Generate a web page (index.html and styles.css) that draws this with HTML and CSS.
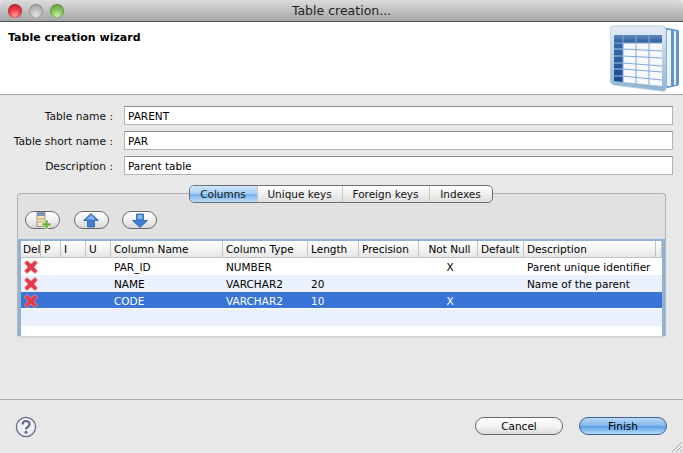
FILE: index.html
```html
<!DOCTYPE html>
<html lang="en">
<head>
  <meta charset="UTF-8" />
  <title>Table creation...</title>
  <link rel="stylesheet" href="styles.css">
</head>
<body>
  <div class="window">
    <div class="titlebar">
      <div class="lights">
        <span class="light red"></span>
        <span class="light grey"></span>
        <span class="light green"></span>
      </div>
      <div class="windowTitle">Table creation...</div>
    </div>

    <div class="banner">
      <div class="bannerTitle">Table creation wizard</div>
      <svg class="bannerIcon" width="70" height="68" viewBox="0 0 70 68">
        <defs>
          <linearGradient id="pageFill" x1="0" y1="0" x2="0" y2="1">
            <stop offset="0" stop-color="#e4edf8"/>
            <stop offset="1" stop-color="#8fb2d2"/>
          </linearGradient>
          <linearGradient id="headFill" x1="0" y1="0" x2="0" y2="1">
            <stop offset="0" stop-color="#5f88c0"/>
            <stop offset="1" stop-color="#2f5d98"/>
          </linearGradient>
          <linearGradient id="sideFill" x1="0" y1="0" x2="0" y2="1">
            <stop offset="0" stop-color="#3a6bad"/>
            <stop offset="1" stop-color="#1b4a8a"/>
          </linearGradient>
        </defs>
        <path d="M52 2 L68 5 Q69 5 69 7 V59 Q69 61 67 61 L52 64 Z" fill="#5f97c8"/>
        <path d="M57 5 H61 V61 H57 Z M64 6 H66 V60 H64 Z" fill="#eef4fb"/>
        <path d="M4 1 H52 Q56 1 56 5 V63 Q56 67 52 66 L4 60 Q0 59 0 55 V5 Q0 1 4 1 Z" fill="url(#pageFill)" stroke="#b4cbe0"/>
        <path d="M4 10 H52 V18 H4 Z" fill="url(#headFill)"/>
        <path d="M4 18 H13 V57 L4 56 Z" fill="url(#sideFill)"/>
        <path d="M13 18 H52 V61 L13 57 Z" fill="#f7f9fc"/>
        <path d="M13 24 L52 26 M13 31 L52 33 M13 38 L52 41 M13 44 L52 47 M13 51 L52 55 M13 10 V57 M26 10 V59 M39 10 V60 M4 18 H52" stroke="#7fa9dc" stroke-width="1" fill="none"/>
        <path d="M4 24 H13 M4 31 H13 M4 38 H13 M4 44 H13 M4 51 H13" stroke="#a8c4e6" stroke-width="1" fill="none"/>
      </svg>
    </div>

    <div class="content">
      <div class="field">
        <label class="fieldLabel" for="tableName">Table name :</label>
        <input class="fieldInput" id="tableName" value="PARENT">
      </div>
      <div class="field">
        <label class="fieldLabel" for="shortName">Table short name :</label>
        <input class="fieldInput" id="shortName" value="PAR">
      </div>
      <div class="field">
        <label class="fieldLabel" for="description">Description :</label>
        <input class="fieldInput" id="description" value="Parent table">
      </div>

      <div class="folder">
        <div class="tabs">
          <button class="tab active">Columns</button>
          <button class="tab">Unique keys</button>
          <button class="tab">Foreign keys</button>
          <button class="tab">Indexes</button>
        </div>
        <div class="folderBody">
          <div class="toolbar">
            <button class="toolBtn" aria-label="Add column">
              <svg width="18" height="17" viewBox="0 0 18 17">
                <rect x="3" y="0.5" width="8" height="14" fill="#f1e6b0" stroke="#8c96a8"/>
                <rect x="3" y="0.5" width="8" height="3.5" fill="#7f93b8"/>
                <path d="M4 7 H10 M4 10 H10" stroke="#b9a66a"/>
                <path d="M11 8 H14 V11 H17 V14 H14 V17 H11 V14 H8 V11 H11 Z" fill="#6cb33f" stroke="#fff" stroke-width="0.5"/>
              </svg>
            </button>
            <button class="toolBtn" aria-label="Move up">
              <svg width="16" height="15" viewBox="0 0 16 15">
                <path d="M8 0.5 L15.5 7.5 H11.5 V14 H4.5 V7.5 H0.5 Z" fill="#3f7ed0" stroke="#2d5fa8" stroke-width="0.8"/>
                <path d="M8 2 L12.5 6.5 H3.5 Z" fill="#8ab8ee"/>
              </svg>
            </button>
            <button class="toolBtn" aria-label="Move down">
              <svg width="16" height="15" viewBox="0 0 16 15">
                <path d="M8 14.5 L15.5 7.5 H11.5 V1 H4.5 V7.5 H0.5 Z" fill="#3f7ed0" stroke="#2d5fa8" stroke-width="0.8"/>
                <path d="M5.5 2 H10.5 V6 H5.5 Z" fill="#8ab8ee"/>
              </svg>
            </button>
          </div>

          <div class="tableFrame">
            <table class="columnsTable">
              <colgroup>
                <col class="colDel"><col class="colP"><col class="colI"><col class="colU">
                <col class="colName"><col class="colType"><col class="colLength"><col class="colPrecision">
                <col class="colNotNull"><col class="colDefault"><col class="colDesc"><col>
              </colgroup>
              <thead>
                <tr>
                  <th>Del</th><th>P</th><th>I</th><th>U</th>
                  <th>Column Name</th><th>Column Type</th><th>Length</th><th>Precision</th>
                  <th class="center">Not Null</th><th>Default</th><th>Description</th><th></th>
                </tr>
              </thead>
              <tbody>
                <tr>
                  <td class="delCell"><svg class="delIcon" viewBox="0 0 14 14"><use href="#cross"/></svg></td>
                  <td></td><td></td><td></td>
                  <td>PAR_ID</td><td>NUMBER</td><td></td><td></td>
                  <td class="center">X</td><td></td><td>Parent unique identifier</td><td></td>
                </tr>
                <tr class="alt">
                  <td class="delCell"><svg class="delIcon" viewBox="0 0 14 14"><use href="#cross"/></svg></td>
                  <td></td><td></td><td></td>
                  <td>NAME</td><td>VARCHAR2</td><td>20</td><td></td>
                  <td></td><td></td><td>Name of the parent</td><td></td>
                </tr>
                <tr class="selected">
                  <td class="delCell"><svg class="delIcon" viewBox="0 0 14 14"><use href="#cross"/></svg></td>
                  <td></td><td></td><td></td>
                  <td>CODE</td><td>VARCHAR2</td><td>10</td><td></td>
                  <td class="center">X</td><td></td><td></td><td></td>
                </tr>
                <tr class="alt">
                  <td colspan="12"></td>
                </tr>
              </tbody>
            </table>
          </div>
        </div>
      </div>
    </div>

    <div class="footer">
      <svg class="help" width="22" height="22" viewBox="0 0 22 22">
        <circle cx="11" cy="11" r="9.6" fill="#f0f0f2" stroke="#62708c" stroke-width="1.3"/>
        <path d="M7.6 8.4 C7.6 3.9 14.6 3.9 14.6 8.2 C14.6 10.8 11 10.8 11 13.4" fill="none" stroke="#5b6b8a" stroke-width="2.2"/>
        <circle cx="11" cy="16.3" r="1.5" fill="#5b6b8a"/>
      </svg>
      <div class="actions">
        <button class="actionBtn">Cancel</button>
        <button class="actionBtn primary">Finish</button>
      </div>
      <svg class="grip" width="12" height="12" viewBox="0 0 12 12">
        <path d="M11 1 L1 11 M11 5 L5 11 M11 9 L9 11" stroke="#a8a8a8" fill="none"/>
      </svg>
    </div>
  </div>

  <svg width="0" height="0" class="defs">
    <symbol id="cross" viewBox="0 0 14 14">
      <path d="M3 0.5 L7 4 L11 0.5 L13.5 3 L10 7 L13.5 11 L11 13.5 L7 10 L3 13.5 L0.5 11 L4 7 L0.5 3 Z" fill="#e23a48" stroke="#f08a90" stroke-width="0.8"/>
    </symbol>
  </svg>
</body>
</html>
```

FILE: styles.css
```css
html, body {
  margin: 0;
  height: 100%;
}

body {
  background: #e8e8e8;
  color: #000;
  font-family: "DejaVu Sans", "Liberation Sans", sans-serif;
  font-size: 10.5px;
  overflow: hidden;
}

.defs {
  display: block;
  height: 0;
}

.window {
  position: relative;
  height: 453px;
  display: flex;
  flex-direction: column;
}

.titlebar {
  height: 21px;
  flex: none;
  display: flex;
  align-items: center;
  background: linear-gradient(#dcdcdc, #a6a6a6);
  border-bottom: 1px solid #515151;
  border-radius: 5px 5px 0 0;
}

.lights {
  display: flex;
  gap: 7px;
  margin-left: 8px;
  width: 56px;
  flex: none;
}

.light {
  width: 14px;
  height: 14px;
  border-radius: 50%;
  box-shadow: inset 0 0 0 1px rgba(0,0,0,0.18);
}

.red {
  background: radial-gradient(circle at 50% 85%, #ff9a9a, #e8313a 55%, #b5333a);
}

.grey {
  background: radial-gradient(circle at 50% 85%, #e4e4e4, #b4b4b4 60%, #989898);
}

.green {
  background: radial-gradient(circle at 50% 85%, #c8f0a8, #7dbd55 55%, #5f9e48);
}

.windowTitle {
  flex: 1;
  text-align: center;
  padding-right: 64px;
  font-size: 12.5px;
  color: #222;
}

.banner {
  height: 73px;
  flex: none;
  background: #fff;
  border-bottom: 1px solid #a9a9a9;
  display: flex;
  justify-content: space-between;
  padding: 9px 3px 0 8px;
  box-sizing: border-box;
}

.bannerTitle {
  font-weight: bold;
  font-size: 11px;
}

.bannerIcon {
  margin-top: -6px;
}

.content {
  flex: 1;
  padding: 11px 10px 0 0;
  display: flex;
  flex-direction: column;
  gap: 6px;
}

.field {
  display: flex;
  align-items: center;
  height: 19px;
}

.fieldLabel {
  width: 113px;
  margin-right: 11px;
  padding-top: 1px;
  text-align: right;
  flex: none;
  color: #111;
  font-size: 10.7px;
}

.fieldInput {
  flex: 1;
  min-width: 0;
  height: 19px;
  box-sizing: border-box;
  border: 1px solid #b4b4b4;
  border-top-color: #8e8e8e;
  background: #fff;
  padding: 0 3px;
  font: inherit;
  color: #000;
  outline: none;
}

.folder {
  margin: 4px 7px 0 17px;
  display: flex;
  flex-direction: column;
}

.tabs {
  display: flex;
  align-self: center;
  height: 16px;
  margin-right: 2px;
  margin-bottom: -10px;
  border: 1px solid #6f6f6f;
  border-radius: 5px;
  background: linear-gradient(#fff, #ececec 60%, #dedede);
  overflow: hidden;
  position: relative;
  z-index: 1;
}

.tab {
  border: 0;
  border-left: 1px solid #c8c8c8;
  background: none;
  padding: 0;
  font: inherit;
  color: #111;
  width: 87px;
}

.tab:first-child {
  border-left: 0;
  width: 67px;
}

.tab:nth-child(2) {
  width: 85px;
}

.tab:last-child {
  width: 63px;
}

.tab.active {
  background: linear-gradient(#cfe5fb, #a6cff5 50%, #72b2ef 52%, #bcdcf8);
}

.folderBody {
  height: 143px;
  box-sizing: border-box;
  background: #e1e1e1;
  border: 1px solid #b0b0b0;
  border-bottom: 0;
  border-radius: 4px 4px 0 0;
  padding-top: 17px;
}

.toolbar {
  display: flex;
  gap: 13.5px;
  margin: 0 0 10px 7px;
}

.toolBtn {
  width: 35px;
  height: 18px;
  padding: 0;
  border: 1px solid #6a6a6a;
  border-radius: 9px;
  background: linear-gradient(#fff, #efefef 50%, #d8d8d8);
  display: flex;
  align-items: center;
  justify-content: center;
}

.tableFrame {
  height: 97px;
  box-sizing: border-box;
  background: #fff;
  border: 3px solid #8fb3d6;
  border-top-width: 2px;
  border-bottom: 0;
  overflow: hidden;
  box-shadow: 0 1px 2px #c8c8c8;
}

.columnsTable {
  width: 100%;
  table-layout: fixed;
  border-collapse: separate;
  border-spacing: 0;
}

.colDel { width: 20px; }
.colP { width: 20px; }
.colI { width: 25px; }
.colU { width: 25px; }
.colName { width: 112px; }
.colType { width: 85px; }
.colLength { width: 51px; }
.colPrecision { width: 60px; }
.colNotNull { width: 59px; }
.colDefault { width: 46px; }
.colDesc { width: 132px; }

.columnsTable th {
  height: 16px;
  padding: 0 0 0 3px;
  font-weight: normal;
  text-align: left;
  white-space: nowrap;
  overflow: hidden;
  background: linear-gradient(#fff, #f2f2f2 55%, #e6e6e6);
  border-right: 1px solid #c4c4c4;
  border-bottom: 1px solid #c4c4c4;
}

.columnsTable th:first-child {
  padding-left: 2px;
}

.columnsTable td {
  height: 17px;
  padding: 0 0 0 3px;
  white-space: nowrap;
  overflow: hidden;
}

.columnsTable th.center,
.columnsTable td.center {
  text-align: center;
}

.alt td {
  background: #eaf1fc;
}

.selected td {
  background: #3875d7;
  box-shadow: inset 0 -1px #fff;
  color: #fff;
}

.columnsTable .delCell {
  padding: 0 0 0 3px;
}

.delIcon {
  display: block;
  width: 14px;
  height: 14px;
}

.footer {
  height: 54px;
  flex: none;
  position: relative;
  border-top: 1px solid #a9a9a9;
  display: flex;
  align-items: flex-start;
  justify-content: space-between;
  padding: 16px 16px 0 15px;
  box-sizing: border-box;
}

.actions {
  display: flex;
  gap: 16px;
  margin-top: 1px;
}

.actionBtn {
  width: 88px;
  height: 18px;
  padding: 0;
  border: 1px solid #6a6a6a;
  border-radius: 9px;
  background: linear-gradient(#fff, #f4f4f4 50%, #dcdcdc);
  font: inherit;
  color: #000;
}

.actionBtn.primary {
  border-color: #3e5f95;
  background: linear-gradient(#bcd9f6, #7fb5ea 50%, #5a9ee4 52%, #b4dcf8);
}

.grip {
  position: absolute;
  right: 0;
  bottom: 0;
}
```
